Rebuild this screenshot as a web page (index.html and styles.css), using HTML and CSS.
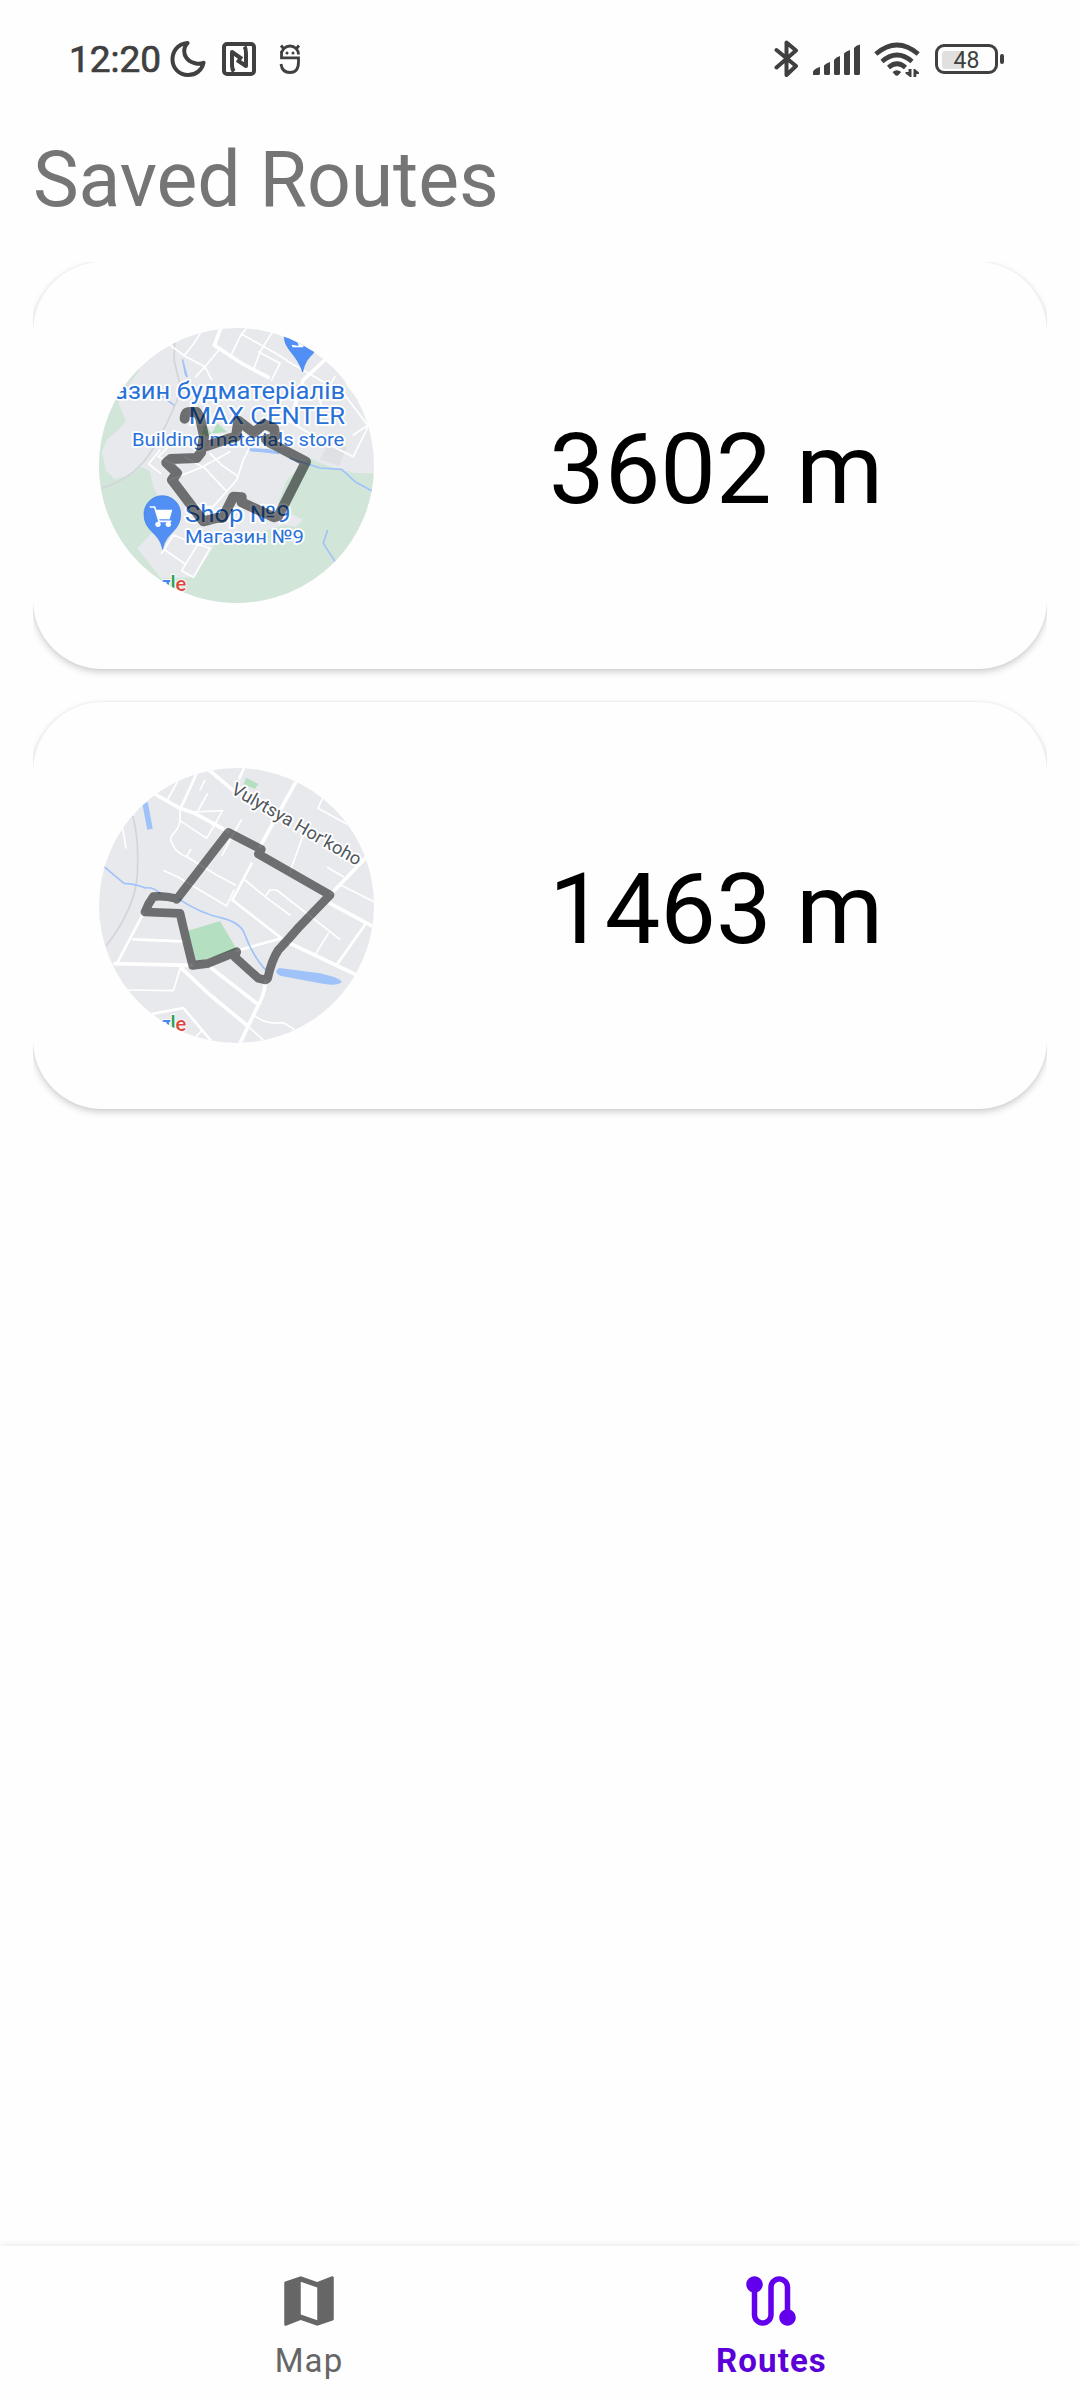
FILE: index.html
```html
<!DOCTYPE html>
<html lang="en">
<head>
<meta charset="utf-8">
<title>Saved Routes</title>
<link rel="stylesheet" href="styles.css">
</head>
<body>
<div class="screen">
  <header class="status">
    <div class="status-left">
      <span class="clock">12:20</span>
      <svg class="i-moon" viewBox="0 0 36 36"><path d="M17.5 2C7 3 2.500 11 2.500 18.500C2.500 27.500 9.500 34 18 34C26 34 32 29 33.500 21.800C31 22.800 28.500 23 26 22.500C18 21 13 15 14.500 7.500C15 5.500 16 3.500 17.500 2Z"/></svg>
      <svg class="i-nfc" viewBox="0 0 34 34"><rect x="2" y="2" width="30" height="30" rx="3"/><path d="M12 29.500Q10 27.500 10 23V10L20 17M22.500 4.500Q24 6.500 24 11V24L15 18"/></svg>
      <svg class="i-bug" viewBox="0 0 24 32"><path d="M3.500 14.800V11.500A8.500 8.500 0 0 1 20.500 11.500M3.500 8V14.800H20.500V19Q20.500 29.500 12 29.500Q4 29.500 3 21M5.500 5.500L3 2.500M18.500 5.500L21 2.500"/><circle cx="9" cy="10" r="1.500"/><circle cx="15" cy="10" r="1.500"/></svg>
    </div>
    <div class="status-right">
      <svg class="i-bt" viewBox="0 0 26 40"><path d="M2.500 11L22 27L12.500 36V3.500L22 11.500L2.500 28.500"/></svg>
      <svg class="i-signal" viewBox="0 0 48 32"><path d="M0 31V27.500Q2 24 7 23V29.500Q7 31 5.500 31ZM11 29.500V21.500Q13 19 17 18V29.500Q17 31 15.500 31H12.500Q11 31 11 29.500ZM21 29.500V16Q23 13 27 12V29.500Q27 31 25.500 31H22.500Q21 31 21 29.500ZM31 29.500V9.500Q33 7 37 6V29.500Q37 31 35.500 31H32.500Q31 31 31 29.500ZM41 29.500V4Q43 1 47 .500V29.500Q47 31 45.500 31H42.500Q41 31 41 29.500Z"/></svg>
      <svg class="i-wifi" viewBox="0 0 46 36"><path class="arc" d="M1.800 12Q23-6 44.200 12M8 19.500Q23 6.500 38 19.500M14.500 25.500Q23 18 31.500 25.500"/><path d="M18.500 30Q22.800 26.500 27.200 30L25 32.500Q22.800 35 20.600 32.500ZM34.500 27H37.500V35H36L31.500 31.500V30H34.500ZM39.500 35V27H41L45 30.500V32H42.300V35Z"/></svg>
      <div class="battery"><div class="cell"><i></i><span>48</span></div><b></b></div>
    </div>
  </header>

  <h1>Saved Routes</h1>

  <main class="routes">
    <article class="card">
      <svg class="map" viewBox="27 24 825 825">
        <rect class="land" x="0" y="0" width="880" height="880"/>
        <path class="park" d="M0 130L150 150L120 190L85 250L108 300L95 320L50 360L36 395L48 452L75 478L120 465L155 440L180 455L190 500L205 530L215 610L190 650L142 684L212 768L290 764L313 772L375 672L640 600L560 560L590 480L660 415L720 440L790 458L880 462V880H0Z"/>
        <path class="land" d="M142 684L185 640L300 560L400 600L420 610L375 672L313 772L212 775ZM400 580L560 560L638 600L618 620L480 600L440 600Z"/>
        <path class="green" d="M335 345L345 310L370 350ZM382 310L412 337L365 340Z"/>
        <path class="block" d="M720 360L770 382L748 438L690 418Z"/>
        <g class="rail"><path d="M254 70L252 120L268 185L262 240L235 300L210 350Q180 405 155 432Q110 482 34 505"/></g>
        <g class="street">
          <path d="M192 91L240 75L282 107L345 140L318 170M282 107L312 70L340 25M345 140L392 83M420 112L454 42L470 25M454 42L540 90L590 120M490 150L512 92L546 38M505 95L570 130L545 180M345 140L365 180M590 122L700 185L768 230L835 318L790 410L720 375L590 300M830 318L790 345M600 300L622 245M735 170L690 245L700 270M768 190L800 230M210 390L176 432L212 460M245 370L205 410L265 440M240 480L335 442L420 395M285 412L345 445L408 512M360 400L395 435L445 470M490 360L460 420L440 480L370 560L325 560M215 700L250 645L300 665L360 685L310 772L275 752L325 670M225 690L285 732"/>
        </g>
        <path class="road" d="M392 25L373 76L455 130L535 172M720 105L640 180L610 270"/>
        <path class="water" d="M278 120L290 170M205 220L250 254M480 390L565 400M600 415L690 444L755 448L795 485L845 512M712 632L700 670L735 724"/>
        <path class="pond" d="M480 384L540 388L572 400L480 394ZM276 115L294 170L284 164Z"/>
        <path class="pin" d="M583 45C580 88 620 100 638 156C650 104 670 112 678 82Q682 45 630 40Z"/>
        <path class="white" d="M605 74L626 78L620 58L642 68L640 82L608 82Z"/>
        <g class="label">
          <text x="72" y="238" font-size="69" textLength="693" lengthAdjust="spacingAndGlyphs">азин будматеріалів</text>
          <text x="296" y="313" font-size="74" textLength="469" lengthAdjust="spacingAndGlyphs">MAX CENTER</text>
          <text x="126" y="377" font-size="56" textLength="637" lengthAdjust="spacingAndGlyphs">Building materials store</text>
          <text x="285" y="605" font-size="69" textLength="317" lengthAdjust="spacingAndGlyphs">Shop №9</text>
          <text x="285" y="670" font-size="56" textLength="357" lengthAdjust="spacingAndGlyphs">Магазин №9</text>
        </g>
        <path class="pin" d="M218 687C208 635 162 636 162 582A55 55 0 0 1 272 582C272 636 228 635 218 687Z"/>
        <path class="white" d="M197 569H247L239 598H207Z"/><path class="cart" d="M181 561H194L207 604H242"/><circle class="white" cx="204" cy="613" r="8"/><circle class="white" cx="235" cy="613" r="8"/>
        <path class="track wide" d="M284 296Q285 276 300 276L320 276L330 292L342 350L333 398L320 414L242 417L229 428L261 459L246 480L340 604L380 594H398L430 530L455 532V547L552 592L565 588L648 425L538 367L528 358H545L556 348L552 325L522 312L492 338L445 302L438 350L420 355L350 378"/>
        <g class="google"><text x="209" y="813"><tspan class="g-blue">g</tspan><tspan class="g-green">l</tspan><tspan class="g-red">e</tspan></text></g>
      </svg>
      <p class="distance">3602 m</p>
    </article>

    <article class="card">
      <svg class="map" viewBox="27 24 825 825">
        <rect class="land" x="0" y="0" width="880" height="880"/>
        <g class="rail"><path d="M128 165Q148 240 142 340Q138 440 50 556"/></g>
        <g class="street">
          <path d="M232 120L265 60M325 150L352 102M270 150V182L350 235L398 152L310 156M270 182C265 220 240 220 242 240Q255 280 290 290L302 268M290 290L380 345L436 375M222 332L262 350L410 438L432 390M454 180L420 240L396 287M98 205L108 264M700 110L684 145L770 192M645 210L600 335M712 322L760 350M752 375L852 425M465 360L525 410L600 465M525 410L540 390L560 390L750 538M715 520L678 580M110 690L250 692L272 620M495 768Q530 795 580 788L612 808M470 795L525 845M310 840L335 812M130 165L150 120M330 90L345 60"/>
        </g>
        <g class="street mid">
          <path d="M320 40L272 145M160 460L80 612M130 538L280 544M485 310L427 420L575 535L440 572M462 24L448 55M185 762L280 744L370 850M740 615L828 490"/>
        </g>
        <g class="road">
          <path d="M200 105L270 145L310 158L415 215M350 24L440 100M618 65L510 260M75 611L305 616M275 625L360 705L470 795M365 625L500 730M527 665Q522 710 500 745L450 850M725 400L830 290M720 430L850 500M600 550L800 645"/>
        </g>
        <path class="green" d="M468 53L505 72L495 86L460 75ZM295 512L390 483L440 568L320 605Z"/>
        <path class="water" d="M42 320L102 370Q140 372 165 384Q190 380 210 400M268 418Q330 460 400 475Q455 490 465 525Q490 590 525 628"/>
        <path class="water-wide" d="M165 128L180 208"/>
        <path class="pond" d="M568 624L690 640Q755 655 755 667Q740 680 690 670L570 647Q548 635 568 624Z"/>
        <path class="track" d="M260 418L415 217L514 268L505 282L720 405L628 500Q585 550 565 570Q545 600 533 655L527 660L505 655L435 592L440 575L355 610L308 616Q286 530 270 460L165 456Q175 430 190 410Q220 406 260 416Z"/>
        <g class="label street-name" transform="translate(420 98) rotate(30)"><text x="0" y="0" font-size="54" textLength="440" lengthAdjust="spacingAndGlyphs">Vulytsya Horʹkoho</text></g>
        <g class="google"><text x="209" y="813"><tspan class="g-blue">g</tspan><tspan class="g-green">l</tspan><tspan class="g-red">e</tspan></text></g>
      </svg>
      <p class="distance">1463 m</p>
    </article>
  </main>

  <nav class="tabs">
    <div class="tab">
      <svg viewBox="0 0 24 24"><path d="M20.500 3l-.160.030L15 5.100 9 3 3.360 4.900c-.210.070-.360.250-.360.480V20.500c0 .280.220.500.500.500l.160-.030L9 18.900l6 2.100 5.640-1.900c.210-.070.360-.250.360-.480V3.500c0-.280-.220-.500-.500-.500zM15 19l-6-2.110V5l6 2.110V19z"/></svg>
      <span>Map</span>
    </div>
    <div class="tab active">
      <svg viewBox="0 0 24 24"><path d="M19 15.180V7c0-2.210-1.790-4-4-4s-4 1.790-4 4v10c0 1.100-.900 2-2 2s-2-.900-2-2V8.820C8.160 8.400 9 7.300 9 6c0-1.660-1.340-3-3-3S3 4.340 3 6c0 1.300.840 2.400 2 2.820V17c0 2.210 1.790 4 4 4s4-1.790 4-4V7c0-1.100.900-2 2-2s2 .900 2 2v8.180c-1.160.420-2 1.520-2 2.820 0 1.660 1.340 3 3 3s3-1.340 3-3c0-1.300-.840-2.400-2-2.820z"/></svg>
      <span>Routes</span>
    </div>
  </nav>
</div>
</body>
</html>
```
FILE: styles.css
```css
* { box-sizing: border-box; }
body { margin: 0; font-family: Roboto, sans-serif; background: #fefefe; }
.screen { width: 1080px; height: 2400px; display: flex; flex-direction: column; overflow: hidden; }
svg { display: block; flex: none; }

.status { height: 118px; flex: none; display: flex; justify-content: space-between; padding: 0 76px 0 69px; color: #404040; }
.status-left, .status-right { display: flex; align-items: flex-start; }
.status svg { fill: #404040; }
.clock { font-size: 37px; line-height: 44px; font-weight: 400; -webkit-text-stroke: .7px #404040; margin-top: 38px; width: 101px; white-space: nowrap; }
.i-moon { width: 36px; height: 36px; margin-top: 41px; }
.status .i-moon { fill: none; stroke: #404040; stroke-width: 4; stroke-linejoin: round; }
.i-nfc { width: 34px; height: 34px; margin: 42px 0 0 16px; }
.status .i-nfc { fill: none; stroke: #404040; stroke-width: 4; stroke-linejoin: round; }
.i-bug { width: 24px; height: 32px; margin: 43px 0 0 22px; stroke: #404040; stroke-width: 2.8; }
.i-bug path { fill: none; }
.i-bug circle { stroke: none; }
.i-bt { width: 26px; height: 40px; margin: 39px 13px 0 0; }
.status .i-bt { fill: none; stroke: #404040; stroke-width: 4; stroke-linecap: round; stroke-linejoin: round; }
.i-signal { width: 48px; height: 32px; margin: 44px 13px 0 0; }
.i-wifi { width: 46px; height: 36px; margin: 42px 15px 0 0; }
.i-wifi .arc { fill: none; stroke: #404040; stroke-width: 4.6; }
.battery { display: flex; align-items: center; gap: 2px; margin-top: 44px; }
.cell { width: 63px; height: 30px; border: 3px solid #404040; border-radius: 9px; display: grid; align-items: center; padding-left: 4px; }
.cell i { grid-area: 1 / 1; width: 22px; height: 18px; background: #e0e0e0; border-radius: 3px 0 0 3px; }
.cell span { grid-area: 1 / 1; font-size: 23px; line-height: 24px; text-align: center; padding: 2px 4px 0 0; }
.battery b { width: 4px; height: 10px; border-radius: 2px; background: #404040; }

h1 { margin: 0; padding-left: 33px; height: 144px; font-size: 77px; line-height: 124px; letter-spacing: -.1px; font-weight: 400; color: #757575; flex: none; }

.routes { flex: 1; margin: 0 33px; overflow: hidden; display: flex; flex-direction: column; gap: 33px; }
.card { height: 407px; flex: none; padding: 66px; border-radius: 69px; background: #fefefe; display: flex; align-items: center; box-shadow: 0 3px 7px rgba(0,0,0,.19), 0 0 2px rgba(0,0,0,.08); }
.map { width: 275px; height: 275px; border-radius: 50%; overflow: hidden; }
.distance { flex: 1; margin: 0 -66px 0 0; padding: 7px 0 0 11px; text-align: center; font-size: 99px; line-height: 116px; color: #000; }

.map path { fill: none; stroke-linecap: round; stroke-linejoin: round; }
.map .land { fill: #e8e9ed; }
.map .park { fill: #d1e6d9; }
.map .green { fill: #b4dfc1; }
.map .block { fill: #dfe0e4; }
.map .rail { stroke: #d3d4d7; stroke-width: 5; }
.map .street { stroke: #fff; stroke-width: 5; }
.map .mid { stroke-width: 8; }
.map .road, .map .road path { stroke: #fff; stroke-width: 11; }
.map .water { stroke: #9fc3f8; stroke-width: 5; }
.map .water-wide { stroke: #9fc3f8; stroke-width: 17; stroke-linecap: butt; }
.map .pond { fill: #9fc3f8; }
.map .pin { fill: #528ff5; stroke: #3c7de4; stroke-width: 2; }
.map .white { fill: #fff; }
.map .cart { stroke: #fff; stroke-width: 5; }
.map .track { stroke: #000; stroke-opacity: .53; stroke-width: 26; }
.map .wide { stroke-width: 30; }
.label text { fill: #2871d9; stroke: #fff; stroke-width: 11px; stroke-linejoin: round; paint-order: stroke; }
.street-name text { fill: #50565c; }
.google text { font-family: Lato, sans-serif; font-size: 61px; font-weight: 700; stroke: #fff; stroke-width: 5px; paint-order: stroke; }
.g-blue { fill: #4285f4; }
.g-green { fill: #34a05a; }
.g-red { fill: #df4a3f; }

.tabs { height: 154px; flex: none; display: flex; justify-content: center; background: #fefefe; box-shadow: 0 0 8px rgba(0,0,0,.1); }
.tab { width: 462px; display: flex; flex-direction: column; align-items: center; padding-top: 22px; color: #666; font-size: 33px; line-height: 40px; letter-spacing: 1.1px; }
.tab svg { width: 66px; height: 66px; margin-right: 1px; fill: currentColor; }
.tab span { margin-top: 7px; }
.active { color: #6200ee; }
.active svg { margin-right: 0; }
.active span { font-weight: 700; color: #5b00d8; padding-left: 1px; }
```
